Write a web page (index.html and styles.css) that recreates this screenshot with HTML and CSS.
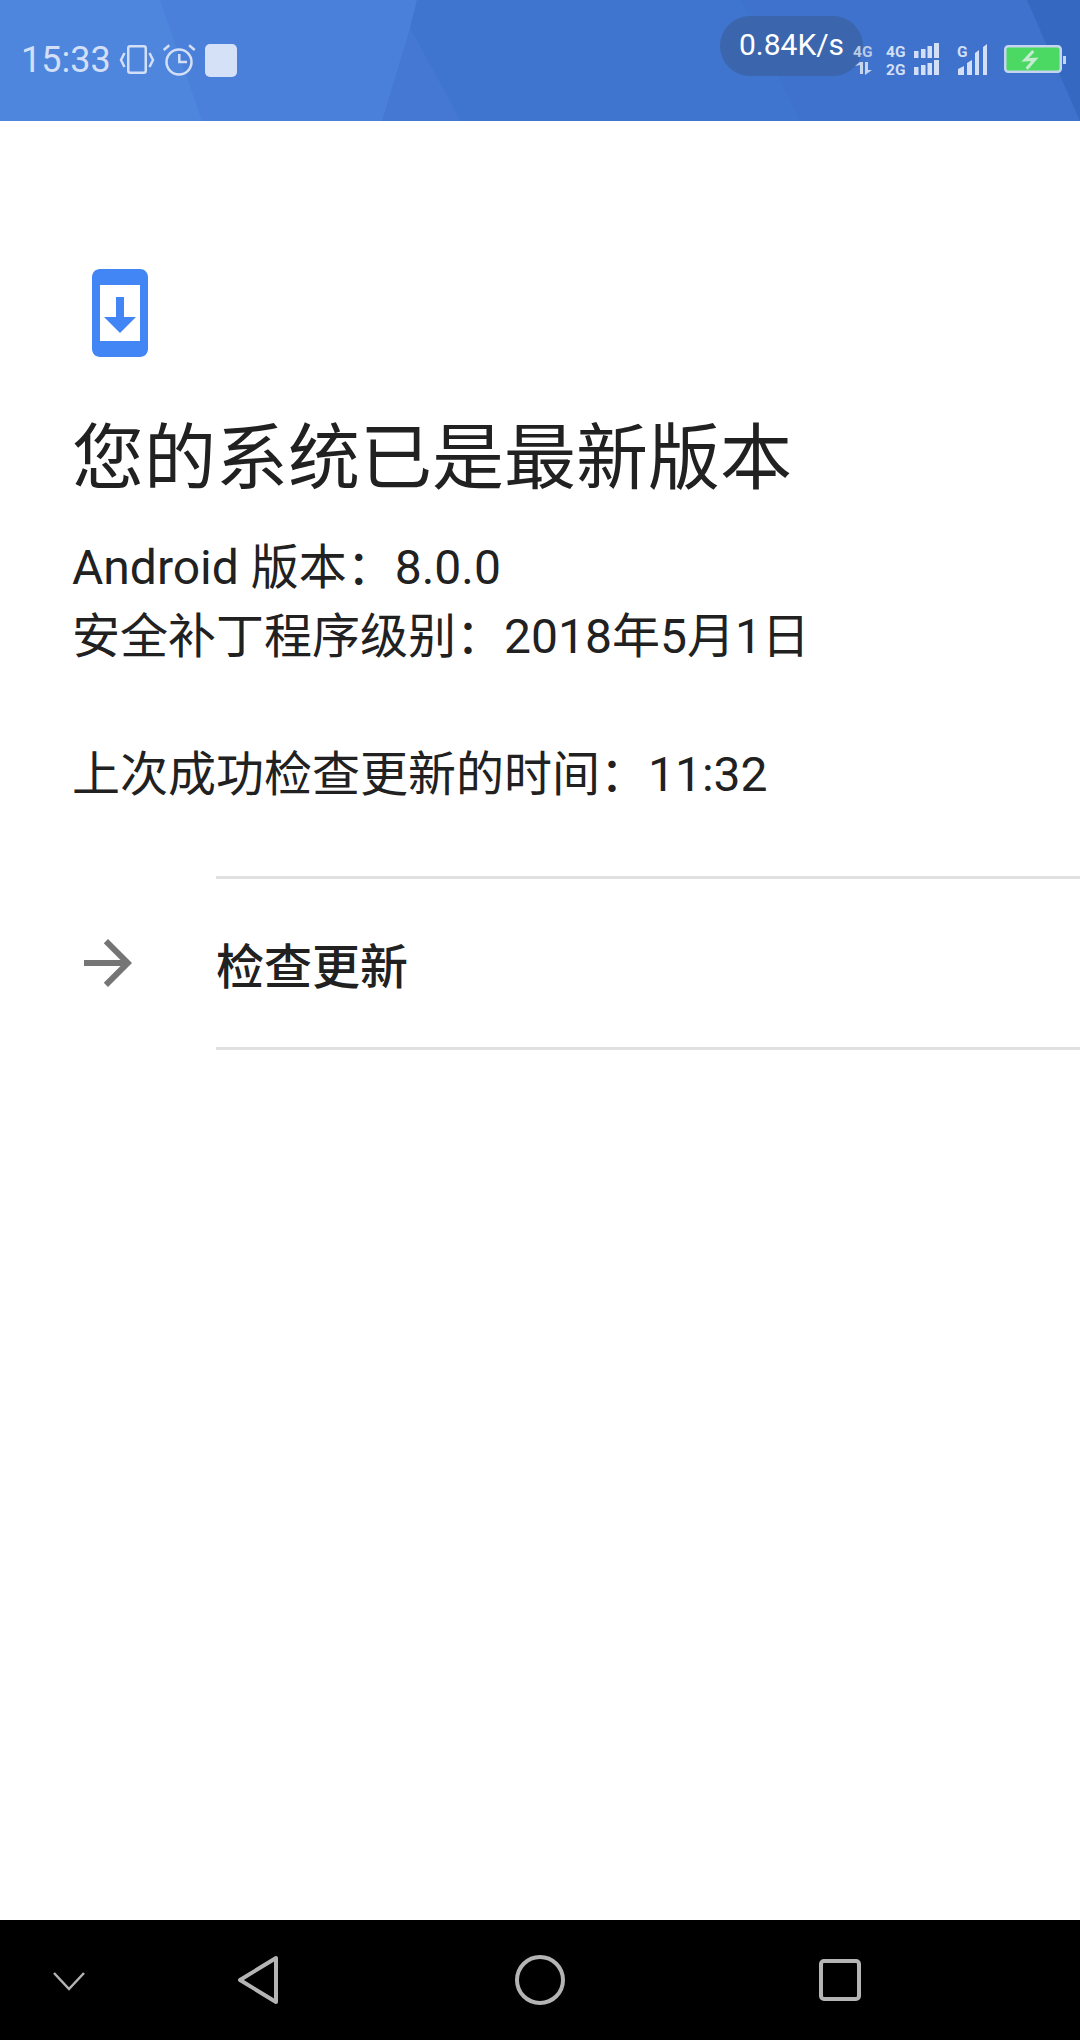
FILE: index.html
```html
<!DOCTYPE html>
<html lang="zh-CN">
<head>
    <meta charset="UTF-8">
    <title>系统更新</title>
    <link rel="stylesheet" href="styles.css">
</head>
<body>
<div id="phone">
    <div id="status">
        <svg class="status-bg" width="1080" height="121" viewBox="0 0 1080 121">
            <rect width="1080" height="121" fill="#4b80da"/>
            <polygon points="0,0 160,0 202,121 0,121" fill="#4e86de"/>
            <polygon points="417,0 410,28 382,121 1080,121 1080,0" fill="#4478d2"/>
            <polygon points="417,0 410,28 461,121 1080,121 1080,0" fill="#4075cf"/>
            <polygon points="741,0 800,121 1080,121 1080,0" fill="#3e72cc"/>
            <polygon points="1027,0 1080,0 1080,121" fill="#3568c0"/>
        </svg>
        <div class="status-left">
            <span class="time">15:33</span>
            <svg class="status-icon" width="36" height="34" viewBox="0 0 36 34" fill="none" stroke="#d3dff6" stroke-width="2.5">
                <rect x="9.250" y="3.250" width="17.500" height="26.500" rx="2"/>
                <path d="M5.500 10L2 17l3.500 7M30.500 10l3.500 7-3.500 7"/>
            </svg>
            <svg class="status-icon" width="34" height="34" viewBox="0 0 34 34" fill="none" stroke="#d3dff6" stroke-width="2.5">
                <circle cx="17" cy="19" r="12.500"/>
                <path d="M17.300 11v8H25M1.700 7l5.600-4.700M32.700 7l-5.600-4.700"/>
            </svg>
            <div class="app-square"></div>
        </div>
        <div class="status-right">
            <div class="speed">0.84K/s</div>
            <svg class="signal" width="214" height="34" viewBox="0 0 214 34">
                <g class="sig-text">
                    <text x="0" y="14">4G</text>
                    <text x="33" y="14">4G</text>
                    <text x="33" y="32">2G</text>
                    <text x="104" y="14">G</text>
                </g>
                <path class="arrows" d="M2 23l5-4h3v12H7v-9zM12 19h3v8h4l-7 5z"/>
                <g fill="#d3dff6">
                    <path d="M61 8h4.500v7H61zM68 6h4.500v9H68zM74.500 3H79v12h-4.500zM81 0h5v15h-5z"/>
                    <path d="M61 24h4.500v8H61zM68 22h4.500v10H68zM74.500 20H79v12h-4.500zM81 17h5v15h-5z"/>
                    <path d="M105 32v-6l6-3v9zM114 32V20l5-3v15zM122 32V10l4-3v25zM130 32V4l4-3v31z"/>
                </g>
                <g transform="translate(151 0)">
                    <rect x="1.250" y="3.250" width="55.500" height="25.500" rx="3" fill="#4bd964" stroke="#c5d5f0" stroke-width="2.500"/>
                    <path d="M29.300 8L21 17l10-.7-8.300 9.400" fill="none" stroke="#c5ecd0" stroke-width="3"/>
                    <rect x="59" y="13" width="3" height="8" fill="#c5d5f0"/>
                </g>
            </svg>
        </div>
    </div>
    <div id="content">
        <svg class="update-icon" width="96" height="96" viewBox="0 0 24 24">
            <path fill="#4285f4" d="M17 1.010L7 1c-1.100 0-2 .9-2 2v18c0 1.100.9 2 2 2h10c1.100 0 2-.9 2-2V3c0-1.100-.9-1.990-2-1.990zM17 19H7V5h10v14zm-1-6h-3V8h-2v5H8l4 4 4-4z"/>
        </svg>
        <h1 class="title">您的系统已是最新版本</h1>
        <p class="info">Android 版本：8.0.0<br>安全补丁程序级别：2018年5月1日</p>
        <p class="info last">上次成功检查更新的时间：11:32</p>
        <div class="item">
            <div class="item-icon">
                <svg width="72" height="72" viewBox="0 0 24 24">
                    <path fill="#757575" d="M12 4l-1.410 1.410L16.170 11H4v2h12.170l-5.580 5.590L12 20l8-8z"/>
                </svg>
            </div>
            <div class="item-text">检查更新</div>
        </div>
    </div>
    <div id="nav">
        <svg width="1080" height="120" viewBox="0 0 1080 120" fill="none" stroke="#b4b4b4">
            <path d="M54 53l15 16 15-16" stroke-width="2.500"/>
            <path d="M276 38v44l-36-22z" stroke-width="4" stroke-linejoin="round"/>
            <circle cx="540" cy="60" r="23" stroke-width="4"/>
            <rect x="821" y="41" width="38" height="38" rx="3" stroke-width="4"/>
        </svg>
    </div>
</div>
</body>
</html>
```

FILE: styles.css
```css
*{
    margin:0;
    padding:0;
    box-sizing:border-box;
}
body{
    background:#fff;
    font-family:Roboto,"Noto Sans CJK SC",sans-serif;
    color:#212121;
}
#phone{
    width:1080px;
    height:2040px;
    display:flex;
    flex-direction:column;
    overflow:hidden;
}
#status{
    height:121px;
    position:relative;
    display:flex;
    justify-content:space-between;
    align-items:flex-start;
    padding:16px 13px 0 21px;
}
.status-bg{
    position:absolute;
    left:0;
    top:0;
}
.status-left,.status-right{
    position:relative;
    display:flex;
}
.status-left{
    align-items:center;
    gap:7px;
    height:34px;
    margin-top:27px;
    color:#d3dff6;
}
.time{
    font-size:36px;
    margin-right:1px;
}
.status-icon{
    flex:none;
}
.app-square{
    width:32px;
    height:33px;
    border-radius:5px;
    background:#d5e1f7;
    margin-left:2px;
}
.speed{
    width:143px;
    height:60px;
    border-radius:30px;
    background:#3b66ad;
    color:#fff;
    font-size:30px;
    line-height:58px;
    text-align:center;
}
.signal{
    margin:27px 0 0 -10px;
    flex:none;
}
.sig-text text{
    font-family:Roboto,sans-serif;
    font-size:15.500px;
    font-weight:700;
    fill:#d3dff6;
}
.sig-text text:first-child{
    fill:#bccbe4;
}
.arrows{
    fill:#c6d4ec;
}
#content{
    flex:1;
    padding-top:144px;
}
.update-icon{
    display:block;
    margin-left:72px;
}
.title{
    font-size:72px;
    font-weight:400;
    line-height:96px;
    margin:50px 0 0 72px;
}
.info{
    font-size:48px;
    line-height:69px;
    margin:26px 0 0 72px;
}
.info.last{
    margin-top:69px;
}
.item{
    display:flex;
    margin-top:67px;
}
.item-icon{
    width:216px;
    padding-left:72px;
    display:flex;
    align-items:center;
}
.item-text{
    flex:1;
    height:174px;
    display:flex;
    align-items:center;
    border-top:3px solid #e0e0e0;
    border-bottom:3px solid #e0e0e0;
    font-size:48px;
    font-weight:500;
}
#nav{
    height:120px;
    background:#000;
}
#nav svg{
    display:block;
}
```
